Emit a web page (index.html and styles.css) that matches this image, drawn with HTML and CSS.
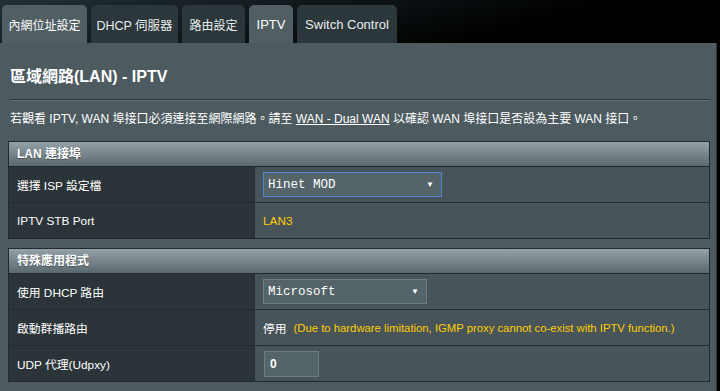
FILE: index.html
```html
<!DOCTYPE html>
<html lang="zh-Hant">
<head>
    <meta charset="UTF-8">
    <title>區域網路(LAN) - IPTV</title>
    <link rel="stylesheet" href="styles.css">
</head>
<body>
<div class="tabs">
    <div class="tab tab-lan active">內網位址設定</div>
    <div class="tab tab-dhcp">DHCP 伺服器</div>
    <div class="tab tab-route">路由設定</div>
    <div class="tab tab-iptv active">IPTV</div>
    <div class="tab tab-switch">Switch Control</div>
</div>

<div class="panel">
    <h1 class="title">區域網路(LAN) - IPTV</h1>
    <div class="splitline"></div>
    <p class="desc">若觀看 IPTV, WAN 埠接口必須連接至網際網路。請至 <a href="#">WAN - Dual WAN</a> 以確認 WAN 埠接口是否設為主要 WAN 接口。</p>

    <div class="form-table">
        <div class="form-head">LAN 連接埠</div>
        <div class="form-row">
            <div class="form-th">選擇 ISP 設定檔</div>
            <div class="form-td">
                <span class="select-wrap select-isp focus">
                    <select>
                        <option selected>Hinet MOD</option>
                    </select>
                </span>
            </div>
        </div>
        <div class="form-row">
            <div class="form-th">IPTV STB Port</div>
            <div class="form-td"><span class="hint">LAN3</span></div>
        </div>
    </div>

    <div class="form-table">
        <div class="form-head">特殊應用程式</div>
        <div class="form-row">
            <div class="form-th">使用 DHCP 路由</div>
            <div class="form-td">
                <span class="select-wrap select-dhcp">
                    <select>
                        <option selected>Microsoft</option>
                    </select>
                </span>
            </div>
        </div>
        <div class="form-row">
            <div class="form-th">啟動群播路由</div>
            <div class="form-td"><span>停用</span><span class="hint note">(Due to hardware limitation, IGMP proxy cannot co-exist with IPTV function.)</span></div>
        </div>
        <div class="form-row">
            <div class="form-th">UDP 代理(Udpxy)</div>
            <div class="form-td"><input type="text" class="input-port" value="0"></div>
        </div>
    </div>
</div>
</body>
</html>
```

FILE: styles.css
```css
body {
    margin: 0;
    background: #000;
    color: #fff;
    font-family: "Liberation Sans", "Noto Sans CJK TC", sans-serif;
    font-size: 12px;
}

/* tabs */
.tabs {
    display: flex;
    gap: 4px;
    height: 38px;
    padding: 5px 0 0 2px;
    background: linear-gradient(165deg, #223035 0%, #0c1214 45%, #000 70%);
}
.tab {
    display: flex;
    align-items: center;
    justify-content: center;
    height: 38px;
    border-radius: 5px 5px 0 0;
    background: #2c373b;
    color: #e8ecee;
    font-size: 12px;
    box-sizing: border-box;
}
.tab.active {
    background: #515e63;
    color: #fff;
}
.tab-lan { width: 85px; }
.tab-dhcp { width: 87px; font-size: 12.5px; }
.tab-route { width: 63px; }
.tab-iptv { width: 44px; font-size: 13px; }
.tab-switch { width: 100px; font-size: 13px; }

/* panel */
.panel {
    width: 717px;
    box-sizing: border-box;
    padding: 24px 6px 20px 8px;
    background: #4d5a5f;
    border-right: 1px solid #2e393d;
}
.title {
    margin: 0 0 0 2px;
    font-size: 16px;
    line-height: 20px;
    font-weight: bold;
}
.splitline {
    margin: 12px 0 0 2px;
    height: 1px;
    background: #2f3a3e;
    border-bottom: 1px solid #5e6b70;
}
.desc {
    margin: 8px 0 12px 2px;
    font-size: 12px;
    line-height: 20px;
}
.desc a {
    color: #fff;
    text-decoration: underline;
}

/* form tables */
.form-table {
    border: 1px solid #20292d;
    margin-bottom: 9px;
}
.form-head {
    height: 24px;
    line-height: 24px;
    padding-left: 8px;
    font-weight: bold;
    background: linear-gradient(#94a2a7, #5b696e);
    border-bottom: 1px solid #20292d;
    text-shadow: 0 1px 1px rgba(0, 0, 0, 0.35);
}
.form-row {
    display: grid;
    grid-template-columns: 246px 1fr;
    height: 36px;
    border-bottom: 1px solid #222b2f;
    box-sizing: border-box;
}
.form-row:last-child {
    border-bottom: none;
    height: 35px;
}
.form-th {
    display: flex;
    align-items: center;
    padding-left: 8px;
    background: #2b3539;
    border-right: 1px solid #253034;
    font-size: 11.8px;
}
.form-td {
    display: flex;
    align-items: center;
    padding-left: 8px;
    background: #475459;
    white-space: nowrap;
    font-size: 11.8px;
}
.hint {
    color: #ffcc00;
}
.hint.note {
    margin-left: 7px;
    font-size: 11.3px;
}

/* select */
.select-wrap {
    position: relative;
    display: inline-block;
}
.select-wrap select {
    appearance: none;
    -webkit-appearance: none;
    height: 25px;
    padding: 0 0 0 4px;
    background: #546469;
    border: 1px solid #6d7c82;
    color: #fff;
    font-family: "Liberation Mono", "DejaVu Sans Mono", monospace;
    font-size: 12.5px;
    outline: none;
}
.select-wrap::after {
    content: "▼";
    position: absolute;
    right: 8px;
    top: 8px;
    font-size: 8px;
    line-height: 9px;
    color: #fff;
    pointer-events: none;
}
.select-wrap.focus select {
    border-color: #4f86cf;
}
.select-isp select { width: 179px; }
.select-dhcp select { width: 164px; }

/* input */
.input-port {
    width: 55px;
    height: 26px;
    box-sizing: border-box;
    padding: 0 5px;
    margin-left: 1px;
    background: #546469;
    border: 1px solid #6d7c82;
    color: #fff;
    font-family: "Liberation Sans", sans-serif;
    font-size: 12px;
    font-weight: bold;
    outline: none;
}
```
